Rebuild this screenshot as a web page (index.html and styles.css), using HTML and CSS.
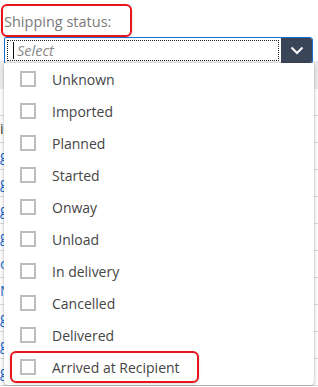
FILE: index.html
```html
<!DOCTYPE html>
<html lang="en">
<head>
  <meta charset="UTF-8" />
  <title>Shipping status filter</title>
  <meta name="viewport" content="width=device-width, initial-scale=1" />
  <link rel="stylesheet" href="styles.css">
</head>
<body>
  <div class="filter">
    <div class="label-wrap">
      <label class="label" for="statusInput">Shipping status:</label>
    </div>
    <div class="combo">
      <div class="combo-input" id="statusInput">
        <span class="caret"></span>
        <span class="placeholder">Select</span>
      </div>
      <button class="combo-btn" type="button">
        <svg width="14" height="9" viewBox="0 0 14 9"><path d="M1.5 1.5 L7 7 L12.5 1.5" fill="none" stroke="#fff" stroke-width="2"/></svg>
      </button>
      <ul class="dropdown">
        <li class="option"><span class="box"></span>Unknown</li>
        <li class="option"><span class="box"></span>Imported</li>
        <li class="option"><span class="box"></span>Planned</li>
        <li class="option"><span class="box"></span>Started</li>
        <li class="option"><span class="box"></span>Onway</li>
        <li class="option"><span class="box"></span>Unload</li>
        <li class="option"><span class="box"></span>In delivery</li>
        <li class="option"><span class="box"></span>Cancelled</li>
        <li class="option"><span class="box"></span>Delivered</li>
        <li class="option highlight"><span class="box"></span>Arrived at Recipient</li>
      </ul>
    </div>
  </div>

  <!-- table behind the open dropdown -->
  <div class="grid">
    <div class="grid-head"></div>
    <div class="grid-row"></div>
    <div class="grid-row"><span class="cell dark">id</span></div>
    <div class="grid-row"><span class="cell link">go</span></div>
    <div class="grid-row"><span class="cell link">go</span></div>
    <div class="grid-row"><span class="cell link">go</span></div>
    <div class="grid-row"><span class="cell link">go</span></div>
    <div class="grid-row"><span class="cell link">co</span></div>
    <div class="grid-row"><span class="cell link">No</span></div>
    <div class="grid-row"><span class="cell link">go</span></div>
    <div class="grid-row"><span class="cell link">go</span></div>
    <div class="grid-row"><span class="cell link">go</span></div>
  </div>
</body>
</html>
```

FILE: styles.css
```css
html, body {
  min-height: 100%;
}
body {
  margin: 0;
  background: #fff;
  font-family: 'Open Sans', 'Noto Sans', Arial, sans-serif;
  color: #444;
}
.filter {
  padding: 4px 5px 0 4px;
}
.label-wrap {
  display: inline-block;
  margin-left: -3px;
  border: 2px solid #e8141c;
  border-radius: 6px;
  padding: 4px 4px 3px 1px;
  width: 122px;
  box-shadow: 0 1px 3px rgba(0, 0, 0, 0.15);
}
.label {
  font-size: 14.5px;
  line-height: 19px;
  color: #7a7a7a;
}
.combo {
  position: relative;
  display: flex;
  height: 25px;
  border: 1px solid #1a6dd0;
  border-radius: 2px 3px 3px 2px;
}
.combo-input {
  flex: 1;
  display: flex;
  align-items: center;
  padding-left: 8px;
  outline: 1px dotted #222;
  outline-offset: -3px;
}
.caret {
  width: 1px;
  height: 17px;
  background: #111;
  margin-right: 3px;
}
.placeholder {
  font-style: italic;
  font-size: 14.5px;
  color: #8a8a8a;
}
.combo-btn {
  width: 31px;
  border: 0;
  padding: 0;
  background: #3a4557;
  display: flex;
  align-items: center;
  justify-content: center;
  border-radius: 0 2px 2px 0;
}
.dropdown {
  position: absolute;
  top: 25px;
  left: -1px;
  right: -2px;
  margin: 0;
  padding: 0;
  list-style: none;
  background: #fff;
  border-radius: 0 0 4px 4px;
  box-shadow: 0 2px 4px rgba(0, 0, 0, 0.25), 0 0 1px rgba(0, 0, 0, 0.3);
  z-index: 5;
}
.option {
  display: flex;
  align-items: center;
  height: 32px;
  padding-left: 16px;
  font-size: 14px;
  color: #454545;
}
.box {
  width: 12px;
  height: 12px;
  border: 2px solid #bdbdbd;
  margin-right: 16px;
  flex-shrink: 0;
}
.highlight {
  margin-left: 6px;
  padding-left: 8px;
  width: 177px;
  height: 28px;
  margin-bottom: 2px;
  border: 2px solid #e8141c;
  border-radius: 6px;
  box-shadow: 0 1px 3px rgba(0, 0, 0, 0.15);
}
.grid {
  margin-top: -3px;
}
.grid-head {
  height: 28px;
  background: #ececec;
}
.grid-row {
  height: 26px;
  border-bottom: 1px solid #ddd;
  font-size: 14px;
  line-height: 26px;
}
.cell.dark {
  color: #333;
}
.cell.link {
  color: #1a6dd0;
}
```
